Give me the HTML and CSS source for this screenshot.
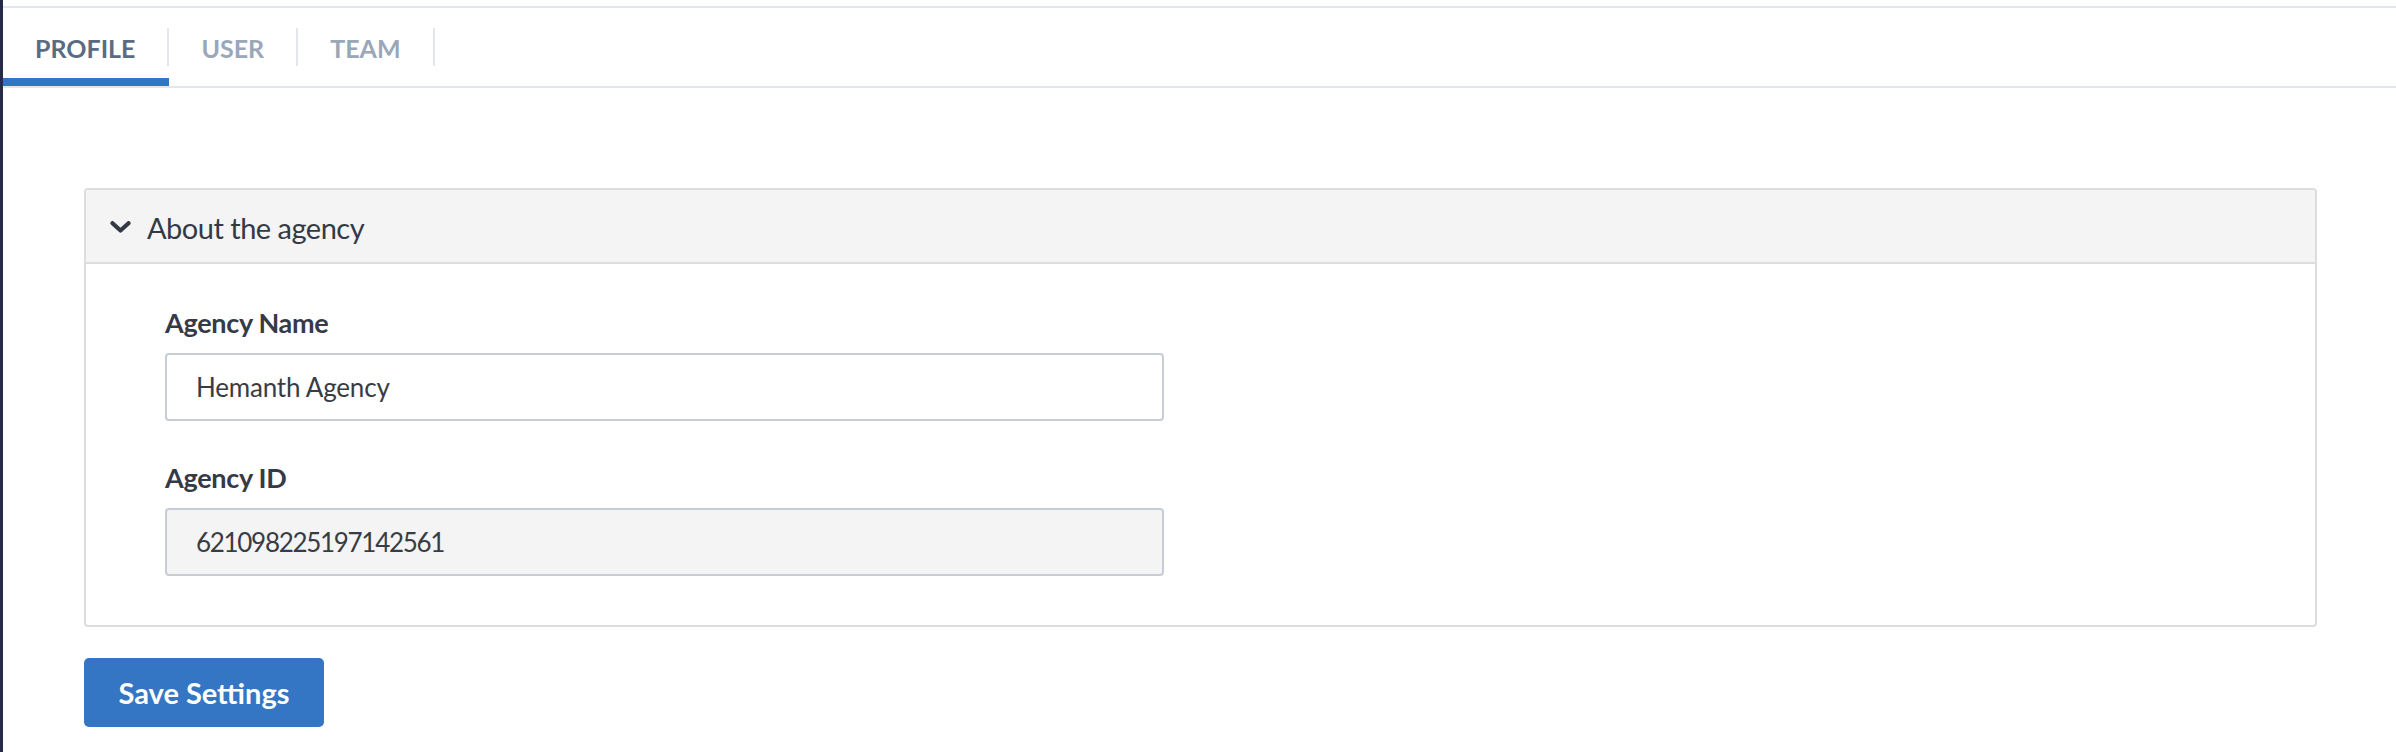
FILE: index.html
```html
<!DOCTYPE html>
<html lang="en">
<head>
<meta charset="utf-8">
<title>Agency settings</title>
<link rel="stylesheet" href="styles.css">
</head>
<body>
<div class="app">
  <div class="rail"></div>
  <main class="main">
    <nav class="tabs">
      <a class="tab active"><span class="tab-label">PROFILE</span><span class="tab-sep"></span></a>
      <a class="tab"><span class="tab-label">USER</span><span class="tab-sep"></span></a>
      <a class="tab"><span class="tab-label">TEAM</span><span class="tab-sep"></span></a>
    </nav>
    <section class="content">
      <div class="panel">
        <div class="panel-head">
          <svg class="chev" width="21" height="12" viewBox="0 0 21 12"><path d="M2.5 2.2 L10.5 9.5 L18.5 2.2" fill="none" stroke="#333a45" stroke-width="4.2" stroke-linecap="round" stroke-linejoin="round"/></svg>
          <span class="panel-title">About the agency</span>
        </div>
        <div class="panel-body">
          <div class="field">
            <label class="field-label">Agency Name</label>
            <div class="input">Hemanth Agency</div>
          </div>
          <div class="field">
            <label class="field-label">Agency ID</label>
            <div class="input readonly id">621098225197142561</div>
          </div>
        </div>
      </div>
      <button class="save">Save Settings</button>
    </section>
  </main>
</div>
</body>
</html>
```

FILE: styles.css
```css
html, body {
  margin: 0;
  padding: 0;
  background: #ffffff;
  font-family: "Lato", "Open Sans", sans-serif;
}
.app {
  display: flex;
  min-height: 752px;
}
.rail {
  width: 3px;
  flex: none;
  background: #262a45;
}
.main {
  flex: 1;
  padding-top: 6px;
}
.tabs {
  display: flex;
  height: 78px;
  border-top: 2px solid #e3e6ea;
  border-bottom: 2px solid #e3e6ea;
}
.tab {
  display: flex;
  align-items: center;
  height: 78px;
  text-decoration: none;
}
.tab.active {
  box-shadow: inset 0 -8px 0 #3375c4;
}
.tab-label {
  padding: 2px 32px 0 32px;
  font-weight: 700;
  font-size: 25px;
  color: #9aa7b8;
}
.tab.active .tab-label {
  color: #5b6b81;
}
.tab-sep {
  width: 2px;
  height: 38px;
  background: #e3e6ea;
}
.content {
  padding: 100px 79px 0 81px;
}
.panel {
  border: 2px solid #dddddd;
  border-radius: 4px;
  overflow: hidden;
}
.panel-head {
  display: flex;
  align-items: center;
  height: 72px;
  padding-left: 24px;
  background: #f4f4f4;
  border-bottom: 2px solid #dddddd;
}
.chev {
  display: block;
  margin-right: 16px;
  margin-top: 2px;
}
.panel-title {
  font-size: 29px;
  letter-spacing: -0.5px;
  color: #333a45;
  padding-top: 2px;
}
.panel-body {
  padding: 39px 80px 49px 79px;
}
.field + .field {
  margin-top: 37px;
}
.field-label {
  display: block;
  height: 40px;
  line-height: 40px;
  margin-bottom: 10px;
  font-weight: 700;
  font-size: 27px;
  letter-spacing: -0.3px;
  color: #353a46;
}
.input {
  box-sizing: border-box;
  width: 999px;
  height: 68px;
  line-height: 64px;
  padding-left: 29px;
  border: 2px solid #c6cdd5;
  border-radius: 4px;
  background: #ffffff;
  font-size: 26px;
  letter-spacing: -0.2px;
  color: #383c44;
}
.input.readonly {
  background: #f4f4f4;
}
.input.id {
  letter-spacing: -1.3px;
}
.save {
  display: block;
  margin-top: 31px;
  width: 240px;
  height: 69px;
  border: none;
  border-radius: 5px;
  background: #3476c4;
  color: #ffffff;
  font-family: "Lato", "Open Sans", sans-serif;
  font-weight: 700;
  font-size: 29px;
  padding: 0;
}
```
